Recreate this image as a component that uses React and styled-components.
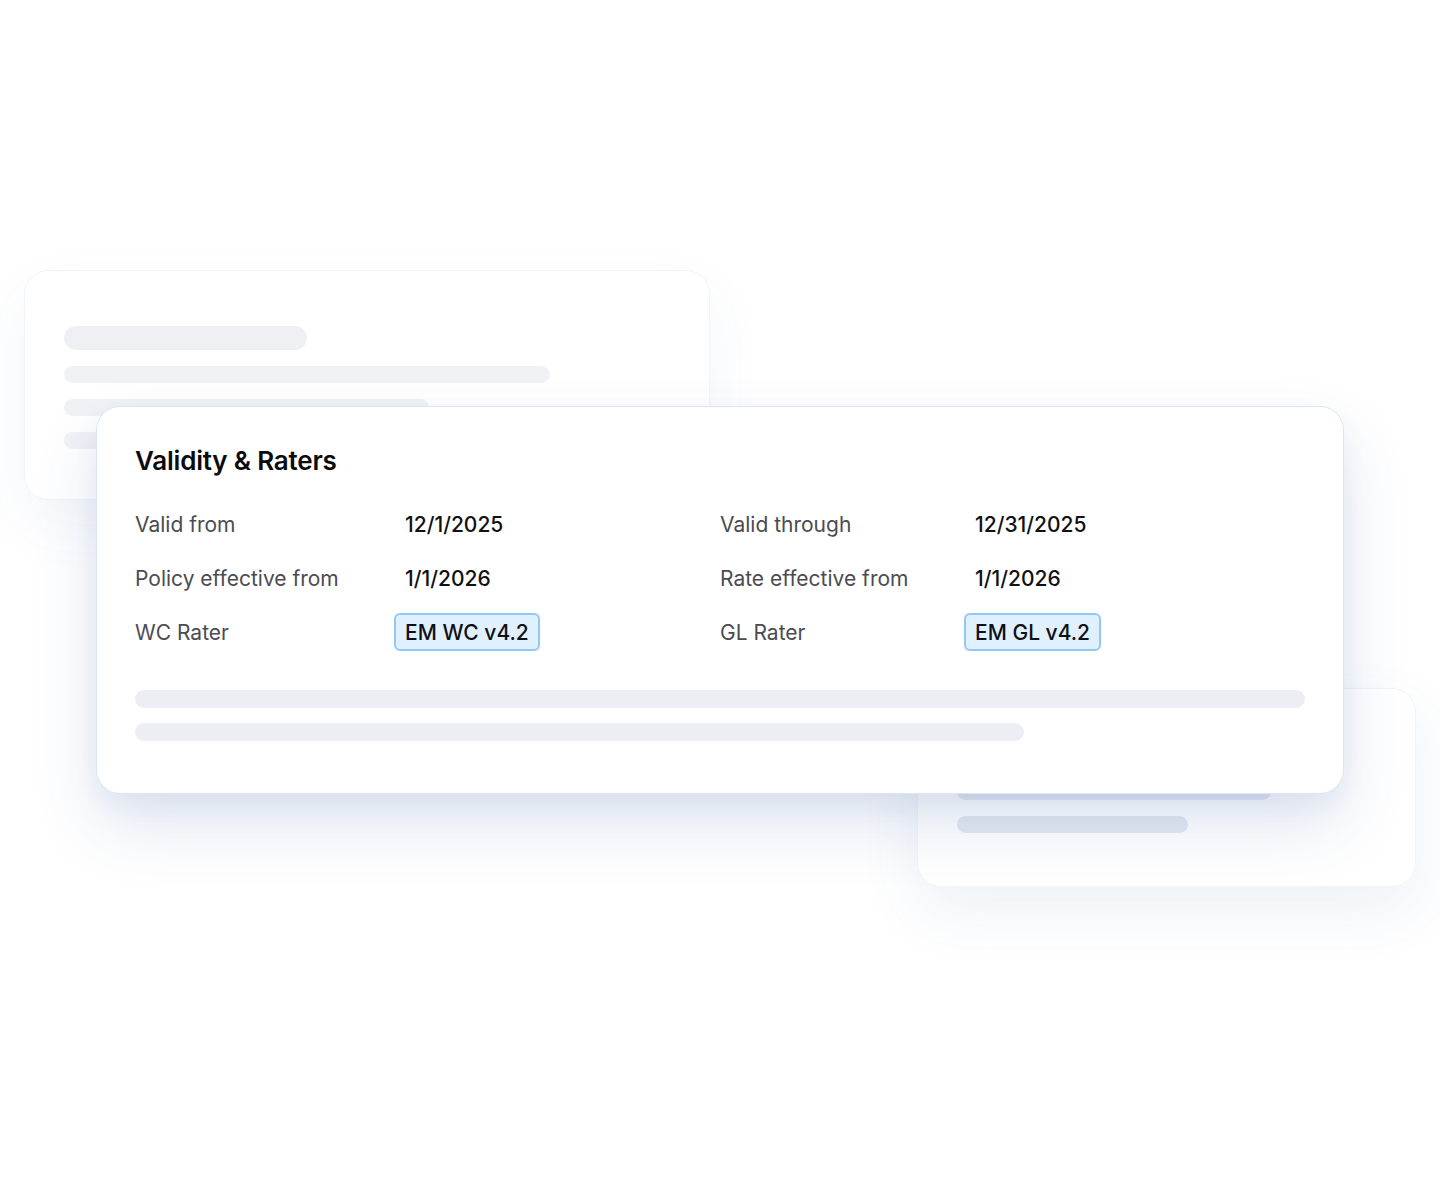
import React from 'react'
import styled, { createGlobalStyle } from 'styled-components'

const GlobalStyle = createGlobalStyle`
	html, body {
		margin: 0;
		padding: 0;
		background: #fff;
	}
	body {
		font-family: Inter, 'Noto Sans', 'Liberation Sans', sans-serif;
		-webkit-font-smoothing: antialiased;
	}
`

const rows = [
	['Valid from', '12/1/2025', 'Valid through', '12/31/2025'],
	['Policy effective from', '1/1/2026', 'Rate effective from', '1/1/2026'],
	['WC Rater', { badge: 'EM WC v4.2' }, 'GL Rater', { badge: 'EM GL v4.2' }],
]

function Value({ value }) {
	if (typeof value === 'object') return <Badge>{value.badge}</Badge>
	return <Strong>{value}</Strong>
}

function App() {
	return (
		<>
			<GlobalStyle />
			<Canvas>
				<GhostCard left={24} top={270} width={686} height={230} pad="55px 39px">
					<Bar width={243} tall />
					<Bar width={486} />
					<Bar width={365} />
					<Bar width={420} />
				</GhostCard>

				<GhostCard left={917} top={688} width={499} height={199} pad="21px 39px" tinted>
					<Bar width={260} tall tinted />
					<Bar width={370} tinted />
					<Bar width={314} tinted />
					<Bar width={231} tinted />
				</GhostCard>

				<MainCard>
					<Title>Validity &amp; Raters</Title>
					<Grid>
						{rows.map(r => (
							<React.Fragment key={r[0]}>
								<Label>{r[0]}</Label>
								<Cell>
									<Value value={r[1]} />
								</Cell>
								<Label>{r[2]}</Label>
								<Cell>
									<Value value={r[3]} />
								</Cell>
							</React.Fragment>
						))}
					</Grid>
					<Skeleton>
						<Line width="100%" />
						<Line width="889px" />
					</Skeleton>
				</MainCard>
			</Canvas>
		</>
	)
}

const Canvas = styled.div`
	position: relative;
	width: 1440px;
	height: 1200px;
	overflow: hidden;
	background: #fff;
`

const GhostCard = styled.div`
	position: absolute;
	left: ${p => p.left}px;
	top: ${p => p.top}px;
	width: ${p => p.width}px;
	height: ${p => p.height}px;
	box-sizing: border-box;
	padding: ${p => p.pad};
	display: flex;
	flex-direction: column;
	gap: 16px;
	background: rgba(255, 255, 255, 0.92);
	border: 1px solid #f1f4f9;
	border-radius: 24px;
	box-shadow: 0 24px 60px rgba(60, 100, 170, ${p => (p.tinted ? 0.09 : 0.06)});
`

const Bar = styled.div`
	width: ${p => p.width}px;
	height: ${p => (p.tall ? 24 : 17)}px;
	border-radius: 12px;
	background: ${p => (p.tinted ? '#e4e9f2' : p.tall ? '#eef0f4' : '#f0f2f6')};
	flex: none;
`

const MainCard = styled.div`
	position: absolute;
	left: 96px;
	top: 406px;
	width: 1248px;
	height: 388px;
	box-sizing: border-box;
	padding: 38px 38px 0;
	display: flex;
	flex-direction: column;
	background: #fff;
	border: 1px solid #dbe6f2;
	border-radius: 24px;
	box-shadow: 0 32px 64px rgba(50, 90, 160, 0.15), 0 10px 24px rgba(50, 90, 160, 0.06);
	z-index: 2;
`

const Title = styled.h2`
	margin: 0 0 21px;
	font-size: 26px;
	line-height: 31px;
	font-weight: 600;
	color: #0b0b0d;
	letter-spacing: -0.2px;
`

const Grid = styled.div`
	display: grid;
	grid-template-columns: 270px 315px 255px 1fr;
	grid-auto-rows: 54px;
	align-items: center;
`

const Label = styled.div`
	font-size: 21px;
	color: #4b4b52;
`

const Cell = styled.div`
	display: flex;
	align-items: center;
`

const Strong = styled.span`
	font-size: 21px;
	font-weight: 500;
	color: #111114;
`

const Badge = styled.span`
	display: inline-flex;
	align-items: center;
	height: 38px;
	box-sizing: border-box;
	margin-left: -11px;
	padding: 0 9px;
	border: 2px solid #94c8f4;
	border-radius: 6px;
	background: #e1f0fe;
	font-size: 21px;
	font-weight: 500;
	color: #0f1114;
`

const Skeleton = styled.div`
	margin-top: 31px;
	display: flex;
	flex-direction: column;
	gap: 15px;
`

const Line = styled.div`
	width: ${p => p.width};
	height: 18px;
	border-radius: 9px;
	background: #eceef4;
`

export default App
